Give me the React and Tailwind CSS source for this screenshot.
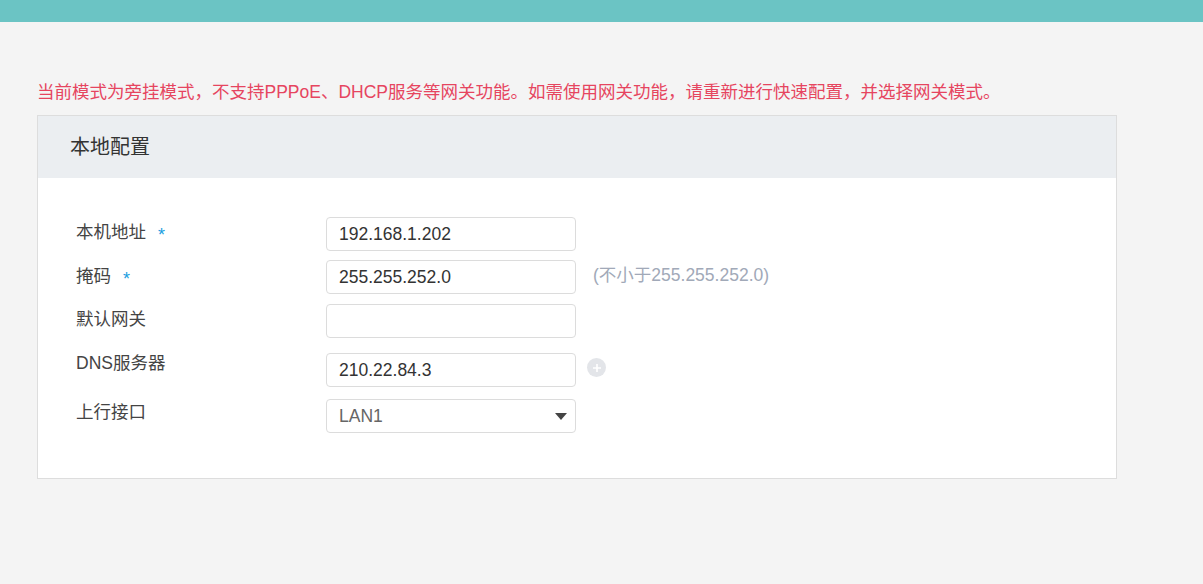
import React from 'react';

const rows = [
  { label: '本机地址', required: true, value: '192.168.1.202', labelShift: 'mt-[-2px]', gap: 'mt-0' },
  { label: '掩码', required: true, value: '255.255.252.0', hint: '(不小于255.255.252.0)', labelShift: 'mt-[-1px]', gap: 'mt-[9px]' },
  { label: '默认网关', value: '', labelShift: 'mt-[-2px]', gap: 'mt-[10px]' },
  { label: 'DNS服务器', value: '210.22.84.3', plus: true, labelShift: 'mt-[-7px]', gap: 'mt-[15px]' },
  { label: '上行接口', select: 'LAN1', labelShift: 'mt-[-4px]', gap: 'mt-[12px]' },
];

const App = () => {
  return (
    <div
      className="min-h-screen bg-[#f4f4f4]"
      style={{ fontFamily: '"Liberation Sans", "Noto Sans CJK SC", sans-serif' }}
    >
      {/* top bar */}
      <div className="h-[22px] bg-[#6bc4c4]"></div>

      <div className="px-[37px]">
        <p className="mt-[58px] text-[17.5px] leading-[24px] text-[#e6455f] whitespace-nowrap">
          当前模式为旁挂模式，不支持PPPoE、DHCP服务等网关功能。如需使用网关功能，请重新进行快速配置，并选择网关模式。
        </p>

        {/* panel */}
        <div className="mt-[11px] w-[1080px] border border-[#dddddd] bg-white">
          <div className="h-[62px] bg-[#ebeef1] pl-[32px] flex items-center text-[20px] text-[#333]">
            本地配置
          </div>

          <div className="pt-[39px] pb-[45px] pl-[38px]">
            {rows.map((row) => (
              <div key={row.label} className={`flex items-start ${row.gap}`}>
                <div className={`w-[250px] h-[34px] leading-[34px] flex items-center text-[17.5px] text-[#444] ${row.labelShift}`}>
                  <span>{row.label}</span>
                  {row.required && (
                    <span className="ml-[12px] text-[#1a9ee0] text-[18px] translate-y-[3px]">*</span>
                  )}
                </div>

                {row.select ? (
                  <div className="w-[250px] h-[34px] border border-[#dcdcdc] rounded-[4px] bg-white pl-[12px] pr-[8px] flex items-center justify-between">
                    <span className="text-[17.5px] text-[#666]">{row.select}</span>
                    <svg width="12" height="7" viewBox="0 0 12 7">
                      <path d="M0 0 H12 L6 7 Z" fill="#444" />
                    </svg>
                  </div>
                ) : (
                  <div className="w-[250px] h-[34px] border border-[#dcdcdc] rounded-[4px] bg-white pl-[12px] flex items-center text-[17.5px] text-[#333]">
                    {row.value}
                  </div>
                )}

                {row.hint && (
                  <span className="ml-[17px] h-[34px] leading-[30px] text-[17.5px] text-[#a1a9b8]">{row.hint}</span>
                )}

                {row.plus && (
                  <div className="ml-[11px] mt-[5px] w-[19px] h-[19px] rounded-full bg-[#e3e5e9] flex items-center justify-center">
                    <svg width="10" height="10" viewBox="0 0 10 10">
                      <path d="M5 1 V9 M1 5 H9" stroke="#fff" strokeWidth="1.6" />
                    </svg>
                  </div>
                )}
              </div>
            ))}
          </div>
        </div>
      </div>
    </div>
  );
};

export default App;
